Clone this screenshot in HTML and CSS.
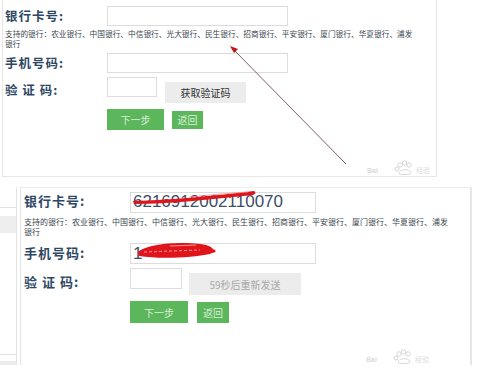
FILE: index.html
```html
<!DOCTYPE html>
<html>
<head>
    <meta charset="utf-8">
    <title>绑定银行卡</title>
    <link rel="stylesheet" href="styles.css">
</head>
<body>
<div class="shot shot-top">
    <form class="bind">
        <div class="row">
            <label class="name">银行卡号:</label>
            <input class="field" type="text">
        </div>
        <p class="note">支持的银行：农业银行、中国银行、中信银行、光大银行、民生银行、招商银行、平安银行、厦门银行、华夏银行、浦发银行</p>
        <div class="row">
            <label class="name">手机号码:</label>
            <input class="field" type="text">
        </div>
        <div class="row row-code">
            <label class="name">验&nbsp;证&nbsp;码:</label>
            <input class="field field-code" type="text">
            <button type="button" class="btn-sms">获取验证码</button>
        </div>
        <div class="row row-act">
            <button type="button" class="btn-next">下一步</button>
            <button type="button" class="btn-back">返回</button>
        </div>
    </form>
    <!-- arrow drawn on the screenshot -->
    <svg class="arrow" width="435" height="177" viewBox="0 0 435 177">
        <line x1="343" y1="164" x2="231" y2="50" stroke="#7d625c" stroke-width="1"/>
        <polygon points="227,46 235,49 231,53" fill="#c0141b"/>
    </svg>
    <div class="mark">
        <span class="mark-bai">Bai</span>
        <svg width="20" height="15" viewBox="0 0 20 15">
            <circle cx="6" cy="5" r="2.2" fill="none" stroke="#d8d8d8"/>
            <circle cx="10.5" cy="3" r="2.2" fill="none" stroke="#d8d8d8"/>
            <circle cx="15" cy="5" r="2.2" fill="none" stroke="#d8d8d8"/>
            <circle cx="3" cy="9" r="2" fill="none" stroke="#d8d8d8"/>
            <path d="M5 13.5 C5 9 16 8 17 13 C17 15 5 15 5 13.5 Z" fill="none" stroke="#d8d8d8"/>
        </svg>
        <span class="mark-jy">经验</span>
    </div>
</div>

<div class="shot shot-bottom">
    <div class="side">
        <div class="side-nav">
            <div class="side-item"></div>
            <div class="side-item side-on"></div>
            <div class="side-fill"></div>
            <div class="side-item side-last"></div>
        </div>
    </div>
    <div class="panel">
        <form class="bind">
            <div class="row">
                <label class="name">银行卡号:</label>
                <div class="field-wrap">
                    <input class="field" type="text" value="6216912002110070">
                    <svg class="scribble" width="186" height="21" viewBox="0 0 186 21">
                        <path d="M3 13 C40 12 85 8 124 3 C126 4 126 6 123 7 C85 11 40 16 4 16 Z" fill="#e0151c"/>
                        <path d="M60 9 C80 7 100 5 118 4" fill="none" stroke="#f28a8a" stroke-width="0.8"/>
                    </svg>
                </div>
            </div>
            <p class="note">支持的银行：农业银行、中国银行、中信银行、光大银行、民生银行、招商银行、平安银行、厦门银行、华夏银行、浦发银行</p>
            <div class="row">
                <label class="name">手机号码:</label>
                <div class="field-wrap">
                    <input class="field" type="text" value="1">
                    <svg class="scribble" width="186" height="21" viewBox="0 0 186 21">
                        <path d="M8 12 C18 3 55 1 76 5 C84 7 86 12 80 14 C62 18 28 19 9 16 Z" fill="#e0151c"/>
                        <path d="M74 11 C80 12 84 11 84 11" fill="none" stroke="#e0151c" stroke-width="3" stroke-linecap="round"/>
                        <path d="M14 12 L70 10" stroke="#f7b6b6" stroke-width="0.8" stroke-dasharray="3 2"/>
                        <path d="M40 6 L66 5" stroke="#f7b6b6" stroke-width="0.8"/>
                    </svg>
                </div>
            </div>
            <div class="row row-code">
                <label class="name">验&nbsp;证&nbsp;码:</label>
                <input class="field field-code" type="text">
                <button type="button" class="btn-sms btn-wait">59秒后重新发送</button>
            </div>
            <div class="row row-act">
                <button type="button" class="btn-next">下一步</button>
                <button type="button" class="btn-back">返回</button>
            </div>
        </form>
        <div class="mark">
            <span class="mark-bai">Bai</span>
            <svg width="20" height="15" viewBox="0 0 20 15">
                <circle cx="6" cy="5" r="2.2" fill="none" stroke="#d8d8d8"/>
                <circle cx="10.5" cy="3" r="2.2" fill="none" stroke="#d8d8d8"/>
                <circle cx="15" cy="5" r="2.2" fill="none" stroke="#d8d8d8"/>
                <circle cx="3" cy="9" r="2" fill="none" stroke="#d8d8d8"/>
                <path d="M5 13.5 C5 9 16 8 17 13 C17 15 5 15 5 13.5 Z" fill="none" stroke="#d8d8d8"/>
            </svg>
            <span class="mark-jy">经验</span>
        </div>
    </div>
</div>
</body>
</html>
```

FILE: styles.css
```css
body {
    margin: 0;
    background-color: white;
    font-family: "Noto Sans CJK SC", "Liberation Sans", sans-serif;
    color: #333;
}

.shot {
    position: relative;
    overflow: hidden;
    box-sizing: border-box;
}

.shot-top {
    margin-left: 2px;
    width: 435px;
    height: 177px;
    border: solid #e6e6e6;
    border-width: 0 1px 1px 1px;
}

.shot-bottom {
    margin-top: 10px;
    width: 472px;
    height: 178px;
    display: flex;
    flex-direction: row;
}

/* form */
.bind {
    margin: 0;
}

.shot-top .bind {
    padding: 6px 0 0 2px;
}

.row {
    display: flex;
    flex-direction: row;
    align-items: flex-start;
}

.name {
    width: 102px;
    font-size: 12.5px;
    line-height: 20px;
    font-weight: bold;
    letter-spacing: 1px;
    color: #2e4763;
    white-space: nowrap;
}

.field {
    width: 181px;
    height: 20px;
    margin: 0;
    padding: 0 2px;
    box-sizing: border-box;
    border: 1px solid #dcdcdc;
    font-family: "Liberation Sans", sans-serif;
    font-size: 17px;
    color: #3d5066;
    outline: none;
}

.field-code {
    width: 50px;
}

.note {
    margin: 3px 0 4px 0;
    width: 412px;
    font-size: 7.7px;
    line-height: 10px;
    color: #3a4650;
}

.row + .row {
    margin-top: 4px;
}

.row-code .name {
    margin-top: 3px;
}

button {
    border: none;
    margin: 0;
    padding: 0;
    cursor: pointer;
    font-family: "Noto Sans CJK SC", sans-serif;
}

.btn-sms {
    margin: 5px 0 0 8px;
    width: 81px;
    height: 21px;
    background-color: #ececec;
    color: #333;
    font-size: 10px;
}

.btn-wait {
    color: #a8a8a8;
}

.row.row-act {
    margin-top: 6px;
    padding-left: 102px;
    align-items: center;
}

.btn-next {
    width: 57px;
    height: 21px;
    background-color: #5cb65c;
    color: #d8efd8;
    font-size: 10px;
}

.btn-back {
    margin-left: 8px;
    width: 31px;
    height: 18px;
    background-color: #5cb65c;
    color: #d8efd8;
    font-size: 10px;
}

.arrow {
    position: absolute;
    left: 0;
    top: 0;
}

/* baidu watermark */
.mark {
    position: absolute;
    display: flex;
    align-items: flex-end;
    gap: 2px;
    color: #dcdcdc;
    font-size: 7px;
    line-height: 9px;
}

.shot-top .mark {
    left: 364px;
    top: 160px;
}

.mark-bai {
    font-family: "Liberation Sans", sans-serif;
    font-weight: bold;
    margin-right: 14px;
}

/* bottom screenshot */
.side {
    width: 21px;
    flex-shrink: 0;
    border-right: 1px solid #e4e4e4;
    box-sizing: border-box;
}

.side-nav {
    width: 16px;
    height: 100%;
    border-right: 1px solid #e4e4e4;
    display: flex;
    flex-direction: column;
}

.side-item {
    height: 20px;
    border-bottom: 1px solid #e2e2e2;
}

.side-on {
    height: 17px;
    margin-top: 8px;
    background-color: #eeeeee;
    border-bottom: none;
}

.side-fill {
    flex: 1;
    border-bottom: 1px solid #e2e2e2;
}

.side-last {
    margin-top: 6px;
    height: 4px;
    background-color: #ececec;
    border-bottom: none;
}

.panel {
    position: relative;
    flex: 1;
    border-top: 1px solid #ededed;
    border-right: 2px solid #e6e6e6;
}

.panel .bind {
    padding: 0 0 0 3px;
}

.panel .name {
    width: 106px;
    font-size: 13px;
    line-height: 21px;
    padding-top: 2px;
}

.panel .field {
    width: 186px;
    height: 21px;
}

.panel .field-code {
    width: 52px;
}

.field-wrap {
    position: relative;
}

.scribble {
    position: absolute;
    left: 0;
    top: 0;
}

.panel .note {
    margin: 4px 0 3px 0;
    width: 428px;
    font-size: 8px;
}

.panel .row-code .name {
    margin-top: 1px;
}

.panel .btn-sms {
    margin: 5px 0 0 7px;
    width: 112px;
    height: 22px;
}

.panel .row-act {
    padding-left: 106px;
}

.panel .btn-next {
    width: 58px;
    height: 22px;
}

.panel .btn-back {
    margin-left: 9px;
    width: 32px;
    height: 21px;
}

.panel .mark {
    left: 345px;
    top: 161px;
}
```
